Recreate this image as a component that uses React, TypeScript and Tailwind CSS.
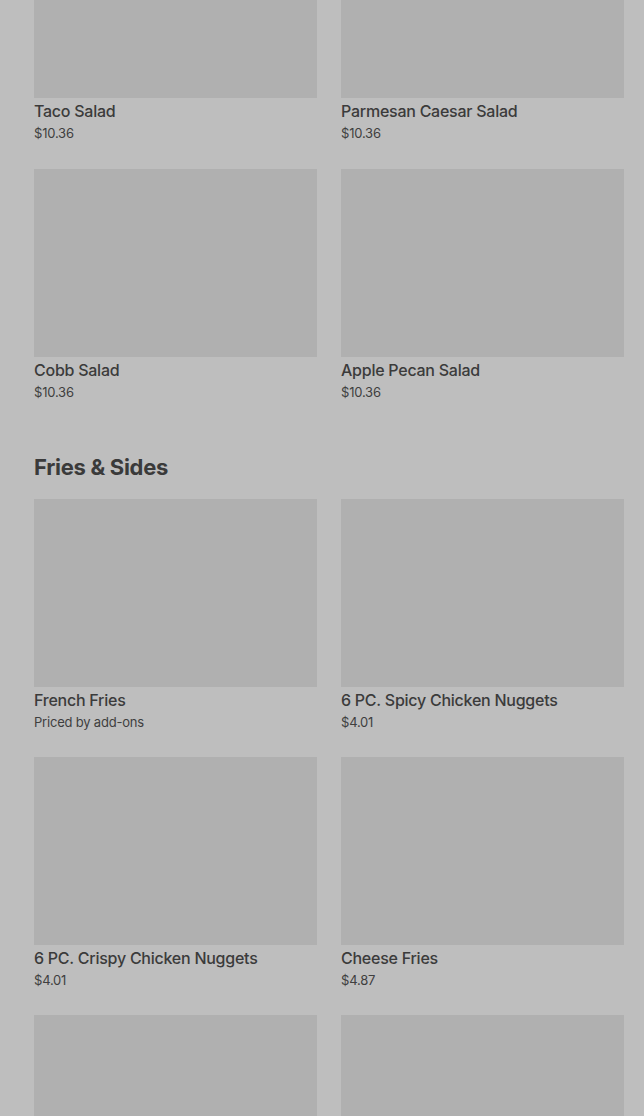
const salads = [
  { name: "Taco Salad", price: "$10.36" },
  { name: "Parmesan Caesar Salad", price: "$10.36" },
  { name: "Cobb Salad", price: "$10.36" },
  { name: "Apple Pecan Salad", price: "$10.36" },
];

const sides = [
  { name: "French Fries", price: "Priced by add-ons" },
  { name: "6 PC. Spicy Chicken Nuggets", price: "$4.01" },
  { name: "6 PC. Crispy Chicken Nuggets", price: "$4.01" },
  { name: "Cheese Fries", price: "$4.87" },
  { name: "", price: "" },
  { name: "", price: "" },
];

function Item({ name, price }: { name: string; price: string }) {
  return (
    <div className="flex flex-col">
      <div className="h-[188px] bg-[#b0b0b0]" />
      <div className="mt-[3px] text-[16px] leading-5 font-medium tracking-[-0.25px] text-[#3b3b3b]">{name}</div>
      <div className="mt-[2px] text-[13px] leading-5 text-[#3f3f3f] tracking-[-0.2px]">{price}</div>
    </div>
  );
}

export default function App() {
  return (
    <div className="h-[1116px] overflow-hidden bg-[#bebebe]" style={{ fontFamily: "Inter, 'Noto Sans', sans-serif" }}>
      <div className="-mt-[90px] pl-[34px] pr-[20px]">
        <div className="grid grid-cols-2 gap-x-6 gap-y-[26px]">
          {salads.map((s) => (
            <Item key={s.name} {...s} />
          ))}
        </div>
        <h2 className="mt-[51px] mb-[18px] text-[22px] leading-7 font-bold tracking-[-0.3px] text-[#3a3a3a]">Fries &amp; Sides</h2>
        <div className="grid grid-cols-2 gap-x-6 gap-y-[25px]">
          {sides.map((s, i) => (
            <Item key={i} {...s} />
          ))}
        </div>
      </div>
    </div>
  );
}
